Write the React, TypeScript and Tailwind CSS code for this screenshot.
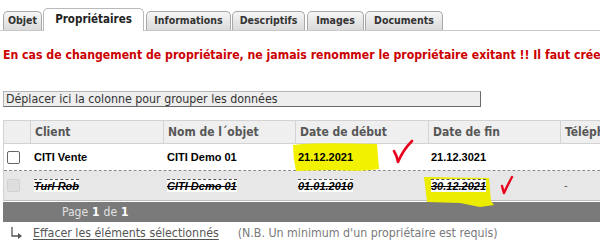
const tabs = [
  { label: "Objet", w: "w-[39px]", ml: "ml-[3px]" },
  { label: "Propriétaires", w: "w-[101px]", ml: "ml-[1px]", active: true },
  { label: "Informations", w: "w-[85px]", ml: "ml-[2px]" },
  { label: "Descriptifs", w: "w-[73px]", ml: "ml-[1px]" },
  { label: "Images", w: "w-[57px]", ml: "ml-[2px]" },
  { label: "Documents", w: "w-[78px]", ml: "ml-[1px]" },
];

const cols = "grid grid-cols-[26px_133px_132px_133px_132px_120px] w-[656px]";
const cellFont = "font-['Liberation_Sans',Arial,sans-serif] text-[11px] font-bold text-black";

function Tabs() {
  return (
    <div className="flex items-end h-[31px] border-b border-[#c9c9c9]">
      {tabs.map((t) =>
        t.active ? (
          <div
            key={t.label}
            className={`${t.w} ${t.ml} h-[23px] -mb-px flex items-center justify-center rounded-t-[5px] border border-b-0 border-[#b9b9b9] bg-white text-[11.5px] font-bold text-[#222]`}
          >
            {t.label}
          </div>
        ) : (
          <div
            key={t.label}
            className={`${t.w} ${t.ml} h-[19px] flex items-center justify-center rounded-t-[5px] border border-b-0 border-[#a9a9a9] bg-gradient-to-b from-[#f6f6f6] to-[#dadada] text-[10.5px] font-bold text-[#333]`}
          >
            {t.label}
          </div>
        )
      )}
    </div>
  );
}

function HeaderCell({ children, first }: { children?: React.ReactNode; first?: boolean }) {
  return (
    <div
      className={`flex items-center pl-[4px] text-[12px] font-bold text-[#575757] whitespace-nowrap overflow-hidden ${
        first ? "" : "border-l border-[#d3d3d3]"
      }`}
    >
      {children}
    </div>
  );
}

function Struck({ children }: { children: React.ReactNode }) {
  return (
    <span className="relative bg-white border-t border-dashed border-[#555] italic line-through leading-[12px]">
      {children}
    </span>
  );
}

export default function App() {
  return (
    <div className="w-[600px] h-[251px] overflow-hidden bg-white font-['DejaVu_Sans_Condensed','DejaVu_Sans',sans-serif] text-[12.3px]">
      <Tabs />

      <p className="mt-[17px] pl-[3px] whitespace-nowrap font-bold text-[12.2px] text-[#cc0000] leading-[14px]">
        En cas de changement de propriétaire, ne jamais renommer le propriétaire exitant !! Il faut créer un nouveau propriétaire
      </p>

      <div className="mt-[29px] ml-[3px] w-[478px] h-[16px] flex items-center pl-[2px] bg-[#eeeeee] border border-t-[#b5b5b5] border-l-[#b5b5b5] border-r-[#6b6b6b] border-b-[#6b6b6b] text-[#333] leading-[14px] whitespace-nowrap">
        Déplacer ici la colonne pour grouper les données
      </div>

      <div className="mt-[13px] ml-[3px] w-[660px] border-l border-[#d3d3d3]">
        {/* header */}
        <div className={`${cols} h-[24px] bg-[#efefef] border-t border-b border-[#d3d3d3]`}>
          <HeaderCell first />
          <HeaderCell>Client</HeaderCell>
          <HeaderCell>Nom de l´objet</HeaderCell>
          <HeaderCell>Date de début</HeaderCell>
          <HeaderCell>Date de fin</HeaderCell>
          <HeaderCell>Téléphone</HeaderCell>
        </div>

        {/* row 1 */}
        <div className={`${cols} h-[27px] bg-white border-b border-dashed border-[#8a8a8a] ${cellFont}`}>
          <div className="flex items-center pl-[3px]">
            <span className="w-[13px] h-[13px] rounded-[2px] border border-[#666] bg-white" />
          </div>
          <div className="flex items-center pl-[4px]">CITI Vente</div>
          <div className="flex items-center pl-[4px]">CITI Demo 01</div>
          <div className="relative flex items-center pl-[3px]">
            <svg className="absolute left-[-4px] top-[-2px]" width="92" height="31" viewBox="0 0 92 31">
              <path d="M2 3 Q20 0 86 2 L88 27 Q70 30 40 28 L5 29 Q2 16 2 3 Z" fill="#f2f200" />
            </svg>
            <span className="relative">21.12.2021</span>
            <svg className="absolute left-[96px] top-[-5px]" width="26" height="28" viewBox="0 0 26 28">
              <path d="M3 12 Q6 17 7 23 Q12 11 21 2" fill="none" stroke="#e8001c" strokeWidth="2.6" strokeLinecap="round" strokeLinejoin="round" />
            </svg>
          </div>
          <div className="flex items-center pl-[3px]">21.12.3021</div>
          <div />
        </div>

        {/* row 2 */}
        <div className={`${cols} h-[29px] bg-[#e7e7e7] ${cellFont}`}>
          <div className="flex items-center pl-[3px]">
            <span className="w-[13px] h-[13px] rounded-[2px] border border-[#d2d2d2] bg-[#dedede]" />
          </div>
          <div className="flex items-center pl-[4px]">
            <Struck>Turl Rob</Struck>
          </div>
          <div className="flex items-center pl-[4px]">
            <Struck>CITI Demo 01</Struck>
          </div>
          <div className="flex items-center pl-[3px]">
            <Struck>01.01.2010</Struck>
          </div>
          <div className="relative flex items-center pl-[3px]">
            <svg className="absolute left-[-6px] top-[5px]" width="76" height="31" viewBox="0 0 76 31">
              <path d="M2 1 L67 2 L69 25 L72 29 L58 31 L38 27 L5 26 Z" fill="#ecec00" />
            </svg>
            <Struck>30.12.2021</Struck>
            <svg className="absolute left-[71px] top-[4px]" width="18" height="22" viewBox="0 0 18 22">
              <path d="M3 11 Q4 15 5 18 Q9 9 13 2" fill="none" stroke="#e8001c" strokeWidth="2.4" strokeLinecap="round" strokeLinejoin="round" />
            </svg>
          </div>
          <div className="flex items-center pl-[4px] font-normal text-[#555]">-</div>
        </div>
        <div className="h-[1px] bg-[#bdbdbd]" />
      </div>

      {/* pager */}
      <div className="ml-[3px] mt-[1px] h-[20px] bg-[#7a7a7a] flex items-center pl-[59px] text-[12px] text-[#e2e2e2] leading-[14px]">
        Page <b className="mx-[4px] text-white">1</b> de <b className="ml-[4px] text-white">1</b>
      </div>

      {/* footer */}
      <div className="mt-[3px] flex items-center h-[16px] whitespace-nowrap">
        <svg className="ml-[10px]" width="13" height="14" viewBox="0 0 13 14">
          <path d="M2 1 V10 H8" fill="none" stroke="#555" strokeWidth="1.3" />
          <path d="M8 7 L12 10 L8 13 Z" fill="#555" />
        </svg>
        <a className="ml-[10px] text-[#555] underline underline-offset-2">Effacer les éléments sélectionnés</a>
        <span className="ml-[19px] text-[#7a7a7a]">(N.B. Un minimum d'un propriétaire est requis)</span>
      </div>
    </div>
  );
}
